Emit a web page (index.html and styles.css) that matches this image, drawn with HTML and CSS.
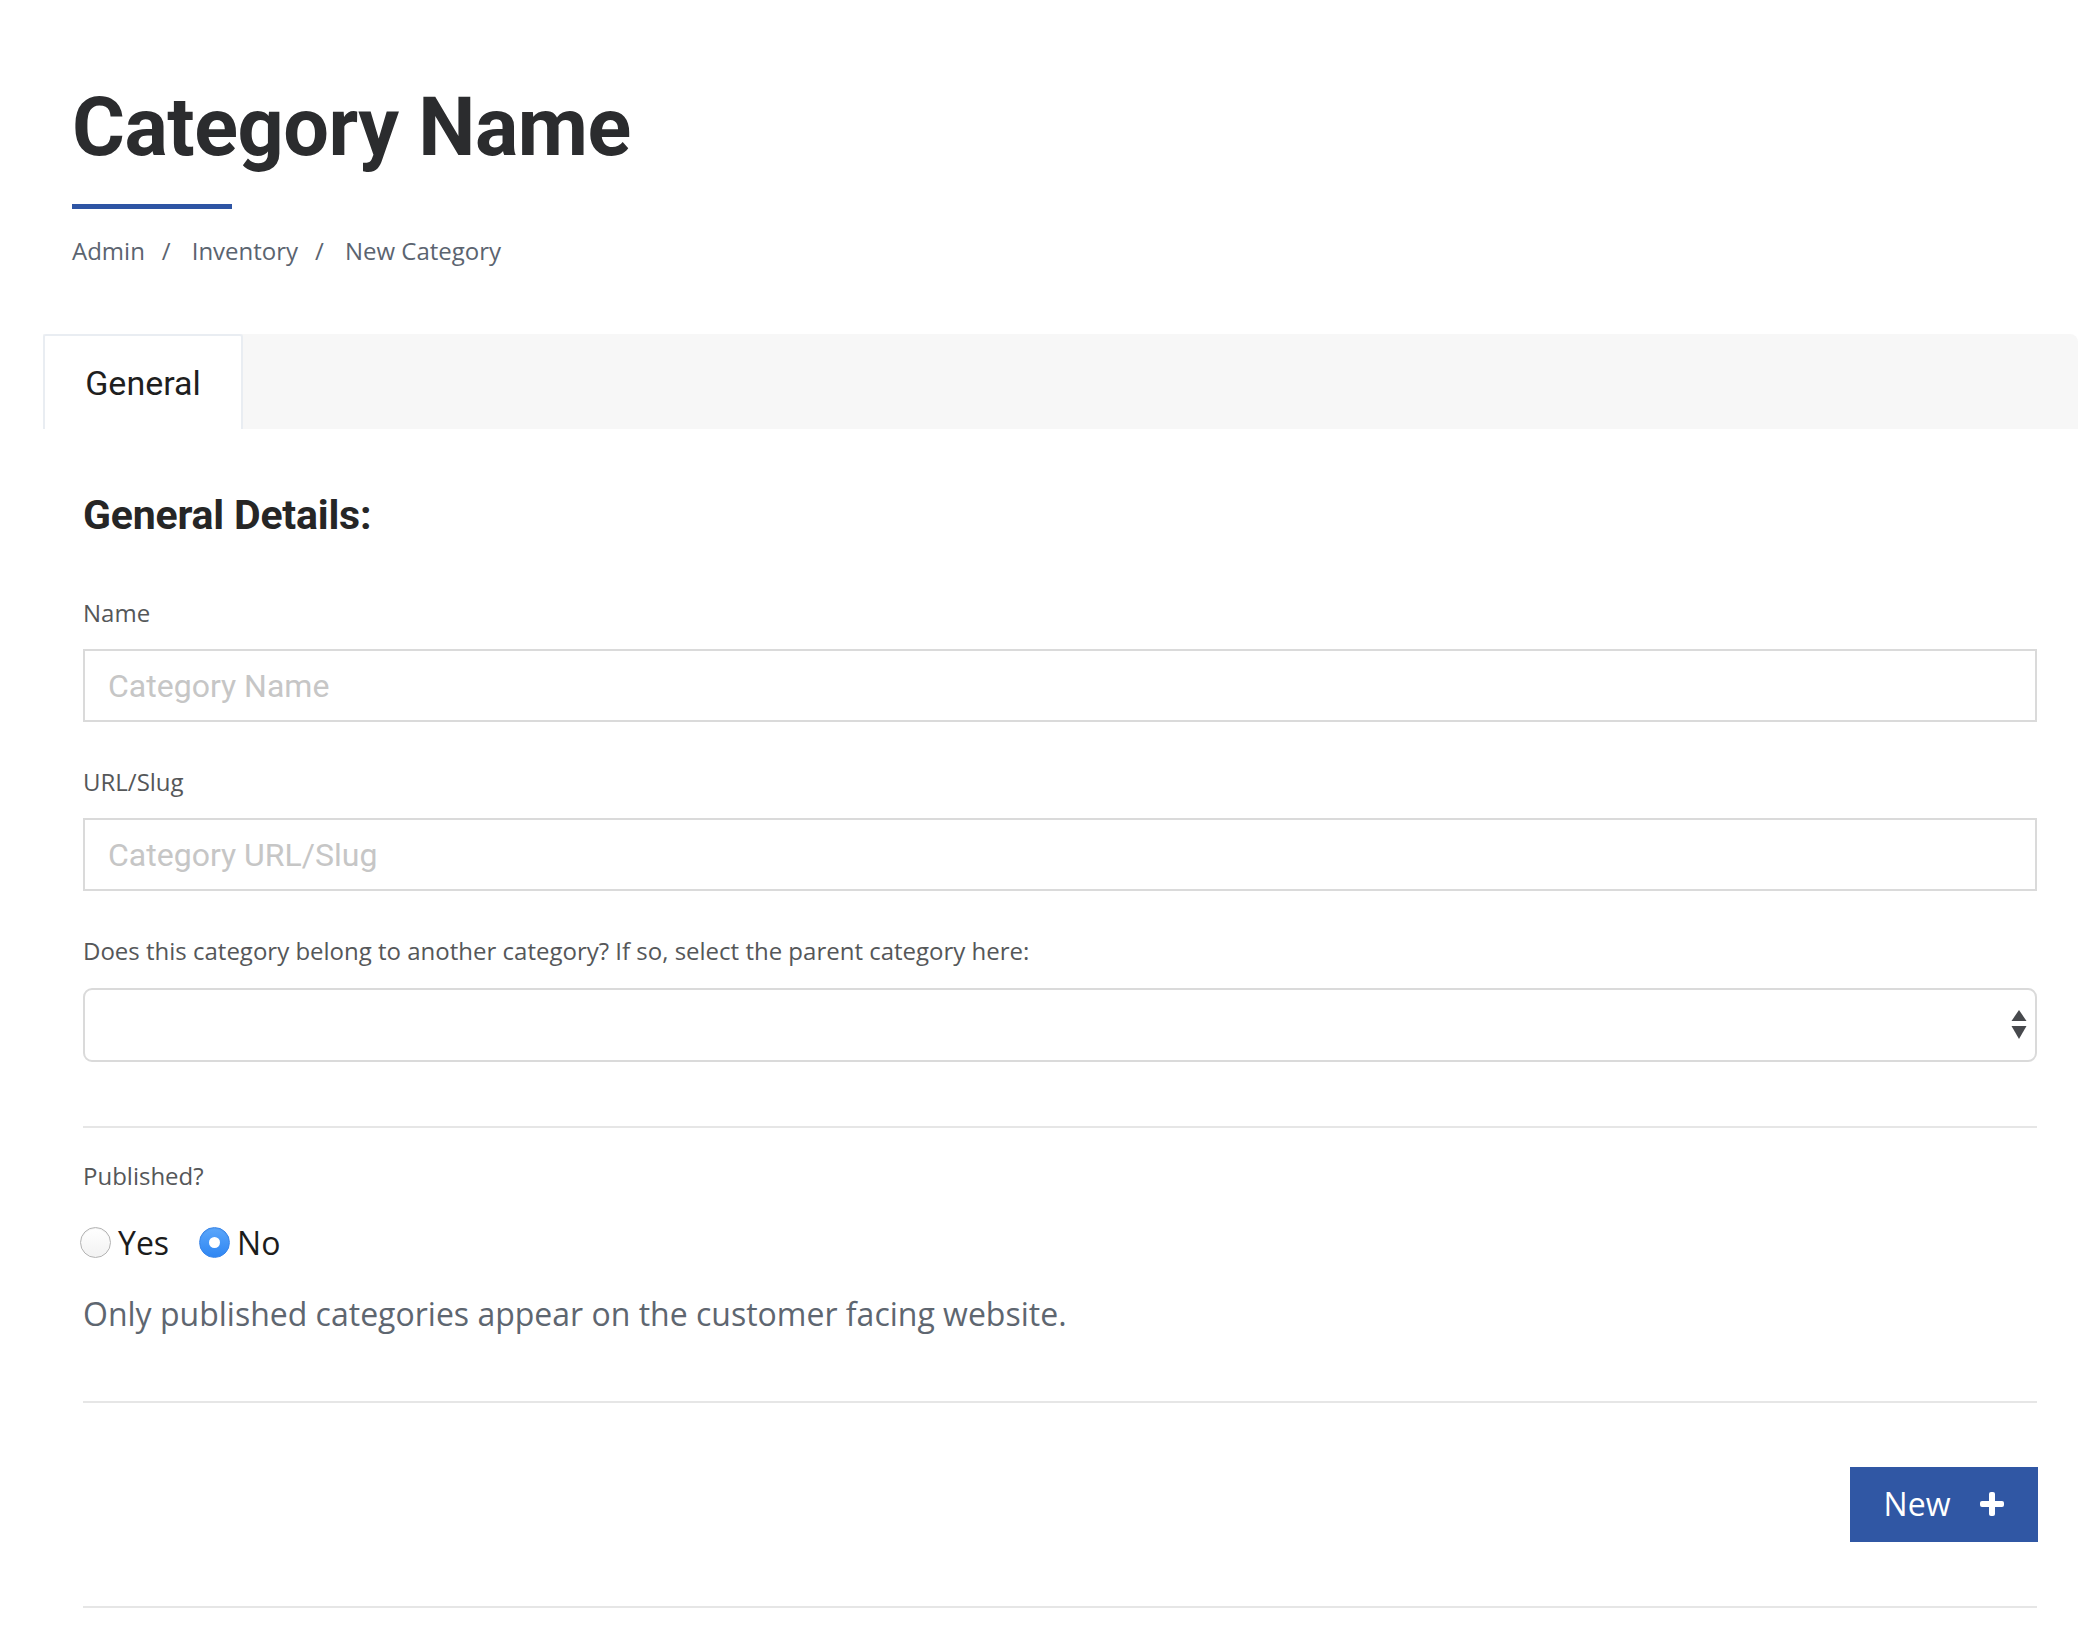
FILE: index.html
```html
<!DOCTYPE html>
<html lang="en">
<head>
<meta charset="utf-8">
<title>Category Name</title>
<link rel="stylesheet" href="styles.css">
</head>
<body>
<div class="page">
  <header class="page-head">
    <h1 class="title">Category Name</h1>
    <div class="title-bar"></div>
    <nav class="breadcrumb">
      <span class="crumb">Admin</span><span class="sep">/</span><span class="crumb">Inventory</span><span class="sep">/</span><span class="crumb">New Category</span>
    </nav>
  </header>

  <div class="tabs">
    <div class="tab active">General</div>
  </div>

  <form class="panel">
    <h2 class="section-title">General Details:</h2>

    <label class="label first" for="name">Name</label>
    <input class="field" id="name" type="text" placeholder="Category Name">

    <label class="label" for="slug">URL/Slug</label>
    <input class="field" id="slug" type="text" placeholder="Category URL/Slug">

    <label class="label" for="parent">Does this category belong to another category? If so, select the parent category here:</label>
    <div class="select-wrap">
      <select class="select" id="parent"><option></option></select>
      <svg class="select-arrows" width="16" height="30" viewBox="0 0 16 30"><path d="M8 0 L15.5 11 L0.5 11 Z" fill="#47494d"/><path d="M0.5 16 L15.5 16 L8 29 Z" fill="#47494d"/></svg>
    </div>

    <hr class="rule rule-a">

    <div class="label small">Published?</div>
    <div class="radios">
      <label class="radio"><input type="radio" name="pub" class="radio-input"><span>Yes</span></label>
      <label class="radio"><input type="radio" name="pub" class="radio-input" checked><span>No</span></label>
    </div>
    <p class="help">Only published categories appear on the customer facing website.</p>

    <hr class="rule rule-b">

    <div class="actions">
      <button type="button" class="btn">New <svg class="plus" width="24" height="24" viewBox="0 0 24 24"><rect x="9" y="0" width="6" height="24" rx="2" fill="#fff"/><rect x="0" y="9" width="24" height="6" rx="2" fill="#fff"/></svg></button>
    </div>

    <hr class="rule rule-c">
  </form>
</div>
</body>
</html>
```

FILE: styles.css
```css
html, body {
  margin: 0;
  padding: 0;
  background: #ffffff;
}

body {
  font-family: "Open Sans", "Liberation Sans", sans-serif;
  color: #333;
}

.page {
  margin-left: 43px;
  width: 2035px;
  padding-top: 80px;
  padding-bottom: 40px;
}

.page-head {
  padding-left: 29px;
}

.title {
  margin: 0;
  font-family: Roboto, "Liberation Sans", sans-serif;
  font-weight: 700;
  font-size: 81px;
  line-height: 96px;
  color: #2b2c2e;
  letter-spacing: -0.5px;
}

.title-bar {
  margin-top: 28px;
  width: 160px;
  height: 5px;
  background: #2e55a4;
}

.breadcrumb {
  margin-top: 24px;
  font-size: 24px;
  line-height: 36px;
  color: #5b6470;
  display: flex;
}

.sep {
  padding: 0 21px 0 17px;
}

.tabs {
  margin-top: 65px;
  height: 95px;
  background: #f7f7f7;
  border-top-right-radius: 8px;
  display: flex;
}

.tab {
  width: 200px;
  box-sizing: border-box;
  height: 95px;
  display: flex;
  align-items: center;
  justify-content: center;
  font-family: Roboto, "Open Sans", sans-serif;
  font-size: 34px;
  color: #1f1f1f;
}

.tab.active {
  background: #ffffff;
  border-top: 2px solid #e9edf2;
  border-left: 2px solid #e9edf2;
  border-right: 2px solid #e9edf2;
  border-top-left-radius: 3px;
  border-top-right-radius: 3px;
  padding-top: 1px;
}

.panel {
  padding: 0 41px 0 40px;
  margin: 0;
  display: flex;
  flex-direction: column;
}

.section-title {
  margin: 61px 0 0 0;
  font-family: Roboto, "Liberation Sans", sans-serif;
  font-weight: 700;
  font-size: 41px;
  line-height: 50px;
  color: #262626;
  letter-spacing: -0.2px;
}

.label {
  display: block;
  margin-top: 42px;
  font-size: 24px;
  line-height: 36px;
  color: #555759;
}

.label.first {
  margin-top: 55px;
}

.label.small {
  margin-top: 31px;
  font-size: 24px;
  line-height: 34px;
}

.field {
  display: block;
  margin: 18px 0 0 0;
  height: 73px;
  box-sizing: border-box;
  width: 100%;
  border: 2px solid #dadada;
  border-radius: 0;
  padding: 0 23px;
  font-family: Roboto, "Open Sans", sans-serif;
  font-size: 32px;
  color: #333;
  background: #fff;
  outline: none;
}

.field::placeholder {
  color: #c6c6c6;
}

.select-wrap {
  position: relative;
  margin-top: 19px;
}

.select {
  display: block;
  width: 100%;
  height: 74px;
  box-sizing: border-box;
  border: 2px solid #dadada;
  border-radius: 9px;
  background: #fff;
  appearance: none;
  -webkit-appearance: none;
  font-family: "Open Sans", sans-serif;
  font-size: 28px;
  padding: 0 20px;
  outline: none;
}

.select-arrows {
  position: absolute;
  right: 10px;
  top: 22px;
}

.rule {
  width: 100%;
  margin: 0;
  border: 0;
  height: 2px;
  background: #e6e6e6;
}

.rule-a {
  margin-top: 64px;
}

.radios {
  margin-top: 29px;
  height: 40px;
  display: flex;
  align-items: center;
  gap: 30px;
  margin-left: -3px;
}

.radio {
  display: flex;
  align-items: center;
  gap: 7px;
  font-size: 32px;
  color: #1c1c1c;
}

.radio-input {
  appearance: none;
  -webkit-appearance: none;
  margin: 0;
  width: 31px;
  height: 31px;
  border-radius: 50%;
  box-sizing: border-box;
  border: 1px solid #b3b3b3;
  background: linear-gradient(#ffffff, #f2f2f2);
  box-shadow: inset 0 1px 1px rgba(0,0,0,0.06);
  position: relative;
}

.radio-input:checked {
  border: 1px solid #3a86ea;
  background: linear-gradient(#5aa6fb, #2f86f2);
}

.radio-input:checked::after {
  content: "";
  position: absolute;
  left: 50%;
  top: 50%;
  width: 11px;
  height: 11px;
  margin: -5.5px 0 0 -5.5px;
  border-radius: 50%;
  background: #ffffff;
}

.help {
  margin: 30px 0 0 0;
  font-size: 32px;
  line-height: 44px;
  color: #5e6670;
}

.rule-b {
  margin-top: 65px;
}

.actions {
  margin-top: 64px;
  display: flex;
  justify-content: flex-end;
}

.btn {
  height: 75px;
  width: 188px;
  box-sizing: border-box;
  margin-right: -1px;
  border: 0;
  border-radius: 0;
  background: #3057a4;
  color: #ffffff;
  font-family: "Open Sans", sans-serif;
  font-size: 32px;
  display: flex;
  align-items: center;
  justify-content: center;
  gap: 30px;
  padding: 0 0 2px 0;
}

.plus {
  display: block;
}

.rule-c {
  margin-top: 64px;
}
```
